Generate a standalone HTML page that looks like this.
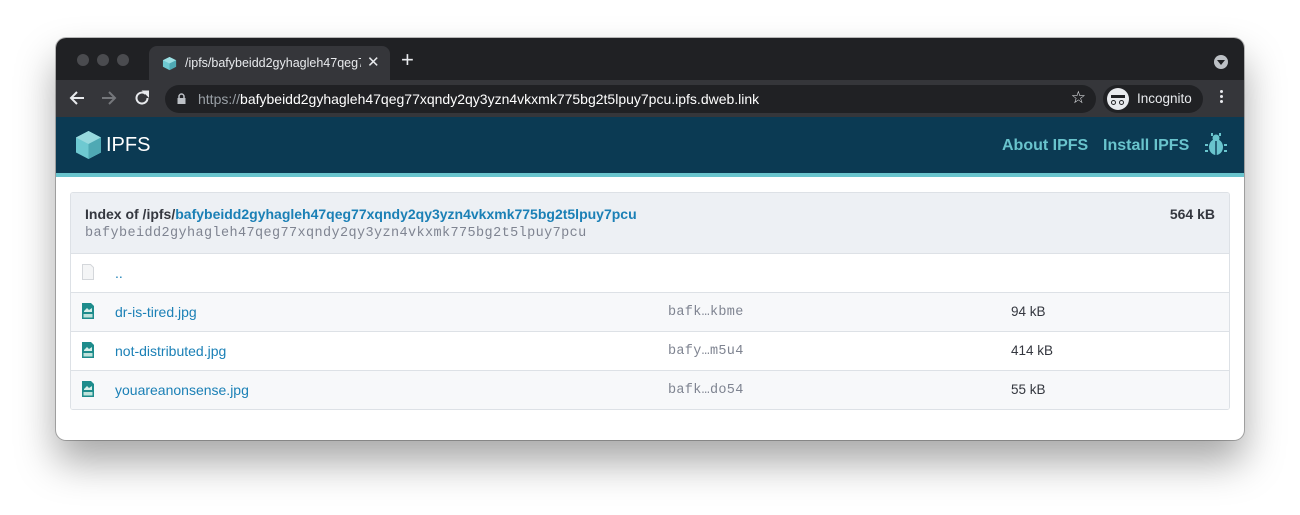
<!DOCTYPE html>
<html><head><style>
*{box-sizing:border-box;margin:0;padding:0}
body{width:1300px;height:515px;background:#fff;font-family:"Liberation Sans",sans-serif;position:relative;overflow:hidden}
.win{position:absolute;left:56px;top:38px;width:1188px;height:402px;border-radius:10px;overflow:hidden;background:#fff;box-shadow:0 22px 40px rgba(0,0,0,.35),0 0 0 1px rgba(0,0,0,.25)}
.tabbar{position:absolute;left:0;top:0;width:100%;height:42px;background:#202124}
.dot{position:absolute;top:16px;width:12px;height:12px;border-radius:50%;background:#4a4b4f}
.tab{position:absolute;left:93px;top:8px;width:241px;height:34px;background:#35363a;border-radius:8px 8px 0 0}
.tab .t{position:absolute;left:36px;top:10px;font-size:12.5px;color:#e8eaed;white-space:nowrap;width:176px;overflow:hidden}
.toolbar{position:absolute;left:0;top:42px;width:100%;height:37px;background:#35363a}
.omni{position:absolute;left:109px;top:5px;width:931px;height:28px;border-radius:14px;background:#202124}
.omni .u{position:absolute;left:33px;top:6px;font-size:14px;color:#9aa0a6;white-space:nowrap}
.omni .u b{color:#fff;font-weight:normal}
.inc{position:absolute;left:1047px;top:5px;width:100px;height:28px;border-radius:14px;background:#202124}
.ipfs{position:absolute;left:0;top:79px;width:100%;background:#0b3a53;border-bottom:4px solid #69c4cd;height:60px}
.nav{position:absolute;top:20px;font-size:16px;color:#69c4cd;font-weight:600}
.tbl{position:absolute;left:14px;top:154px;width:1160px;height:218px;border:1px solid #dde1e6;border-radius:3px;overflow:hidden}
.hd{height:61px;background:#edf0f4;border-bottom:1px solid #dde1e6;position:relative}
.row{height:39px;border-bottom:1px solid #dde1e6;position:relative;font-size:14px}
.row .n{position:absolute;left:44px;top:11px;color:#1b80b6}
.row .h{position:absolute;left:597px;top:12px;font-family:"Liberation Mono",monospace;font-size:13.5px;letter-spacing:.3px;color:#7f8491}
.row .s{position:absolute;left:940px;top:11px;color:#34373f;font-size:13.5px}
.ic{position:absolute;left:11px;top:10px;width:12px;height:16px}
</style></head><body>
<div class="win">
 <div class="tabbar">
  <div class="dot" style="left:21px"></div><div class="dot" style="left:41px"></div><div class="dot" style="left:61px"></div>
  <div class="tab">
   <svg style="position:absolute;left:13px;top:10px" width="15" height="15" viewBox="0 0 16 16"><polygon points="8,1 15,4.5 15,11.5 8,15 1,11.5 1,4.5" fill="#6ec9d1"/><polygon points="8,1 15,4.5 8,8 1,4.5" fill="#9de0e4"/><polygon points="8,8 15,4.5 15,11.5 8,15" fill="#4fa9b4"/></svg>
   <div class="t">/ipfs/bafybeidd2gyhagleh47qeg77xq</div>
   <div style="position:absolute;left:218px;top:7px;color:#e8eaed;font-size:15px">✕</div>
  </div>
  <div style="position:absolute;left:345px;top:9px;color:#e8eaed;font-size:22px;font-weight:300">+</div>
  <div style="position:absolute;left:1158px;top:17px;width:14px;height:14px;border-radius:50%;background:#bdc1c6"><div style="position:absolute;left:3px;top:5px;border-left:4px solid transparent;border-right:4px solid transparent;border-top:5px solid #202124"></div></div>
 </div>
 <div class="toolbar">
  <svg style="position:absolute;left:13px;top:10px" width="16" height="16" viewBox="0 0 16 16" fill="none" stroke="#e8eaed" stroke-width="2"><path d="M15 8H2M8 2L2 8l6 6"/></svg>
  <svg style="position:absolute;left:45px;top:10px" width="16" height="16" viewBox="0 0 16 16" fill="none" stroke="#75777b" stroke-width="2"><path d="M1 8h13M8 2l6 6-6 6"/></svg>
  <svg style="position:absolute;left:78px;top:10px" width="16" height="16" viewBox="0 0 16 16" fill="none" stroke="#e8eaed" stroke-width="2"><path d="M13.5 8A5.5 5.5 0 1 1 11.5 3.8"/><path d="M10 1.5h4v4z" fill="#e8eaed"/></svg>
  <div class="omni">
   <svg style="position:absolute;left:12px;top:8px" width="9" height="12" viewBox="0 0 9 12"><path d="M2 5V3.5a2.5 2.5 0 0 1 5 0V5" stroke="#bdc1c6" stroke-width="1.5" fill="none"/><rect x="0.5" y="5" width="8" height="6" fill="#bdc1c6"/></svg>
   <div class="u">https://<b>bafybeidd2gyhagleh47qeg77xqndy2qy3yzn4vkxmk775bg2t5lpuy7pcu.ipfs.dweb.link</b></div>
   <div style="position:absolute;right:10px;top:3px;color:#e8eaed;font-size:17px">☆</div>
  </div>
  <div class="inc">
   <div style="position:absolute;left:4px;top:3px;width:22px;height:22px;border-radius:50%;background:#e8eaed"><div style="position:absolute;left:4px;top:7px;width:14px;height:3px;background:#202124"></div><div style="position:absolute;left:4px;top:12px;width:5px;height:5px;border:1.5px solid #202124;border-radius:50%"></div><div style="position:absolute;left:12px;top:12px;width:5px;height:5px;border:1.5px solid #202124;border-radius:50%"></div></div>
   <div style="position:absolute;left:34px;top:6px;font-size:13.5px;color:#e8eaed">Incognito</div>
  </div>
  <div style="position:absolute;left:1164px;top:10px;width:3px"><div style="width:3px;height:3px;border-radius:50%;background:#e8eaed;margin-bottom:2px"></div><div style="width:3px;height:3px;border-radius:50%;background:#e8eaed;margin-bottom:2px"></div><div style="width:3px;height:3px;border-radius:50%;background:#e8eaed"></div></div>
 </div>
 <div class="ipfs">
  <svg style="position:absolute;left:19px;top:13px" width="27" height="30" viewBox="0 0 27 30"><polygon points="13.5,1 26,7.5 26,22.5 13.5,29 1,22.5 1,7.5" fill="#6ec9d1"/><polygon points="13.5,1 26,7.5 13.5,14 1,7.5" fill="#98d9de"/><polygon points="13.5,14 26,7.5 26,22.5 13.5,29" fill="#4fa9b4"/></svg>
  <div style="position:absolute;left:50px;top:17px;font-size:20px;color:#fff">IPFS</div>
  <div class="nav" style="left:946px">About IPFS</div>
  <div class="nav" style="left:1047px">Install IPFS</div>
  <svg style="position:absolute;left:1149px;top:16px" width="22" height="24" viewBox="0 0 22 24" fill="#69c4cd"><circle cx="11" cy="5" r="3.5"/><ellipse cx="11" cy="14" rx="7" ry="8"/><rect x="0" y="11" width="3" height="2"/><rect x="19" y="11" width="3" height="2"/><rect x="0" y="17" width="3" height="2"/><rect x="19" y="17" width="3" height="2"/><rect x="6" y="0" width="2" height="3"/><rect x="14" y="0" width="2" height="3"/><rect x="10.3" y="8" width="1.4" height="14" fill="#0b3a53"/></svg>
 </div>
 <div class="tbl">
  <div class="hd">
   <div style="position:absolute;left:14px;top:13px;font-size:14px;font-weight:bold;color:#34373f">Index of /ipfs/<span style="color:#1b80b6">bafybeidd2gyhagleh47qeg77xqndy2qy3yzn4vkxmk775bg2t5lpuy7pcu</span></div>
   <div style="position:absolute;left:14px;top:33px;font-family:'Liberation Mono',monospace;font-size:13.5px;letter-spacing:.4px;color:#7f8491">bafybeidd2gyhagleh47qeg77xqndy2qy3yzn4vkxmk775bg2t5lpuy7pcu</div>
   <div style="position:absolute;right:14px;top:13px;font-size:14px;font-weight:bold;color:#34373f">564 kB</div>
  </div>
  <div style="background:#fff">
  <div class="row" style="background:#fff"><svg class="ic" viewBox="0 0 12 16"><path d="M.5.5h8l3 3v12H.5z" fill="#f4f5f6" stroke="#d4d7db"/></svg><div class="n">..</div></div>
  <div class="row" style="background:#f7f8fa"><svg class="ic" viewBox="0 0 12 16"><path d="M0 0h9l3 3v13H0z" fill="#1e8c8c"/><path d="M2 8l3-3 2 2 3-2v4H2z" fill="#d8efe9"/><rect x="1.5" y="11" width="9" height="3.5" fill="#bfe3dc"/></svg><div class="n">dr-is-tired.jpg</div><div class="h">bafk…kbme</div><div class="s">94 kB</div></div>
  <div class="row" style="background:#fff"><svg class="ic" viewBox="0 0 12 16"><path d="M0 0h9l3 3v13H0z" fill="#1e8c8c"/><path d="M2 8l3-3 2 2 3-2v4H2z" fill="#d8efe9"/><rect x="1.5" y="11" width="9" height="3.5" fill="#bfe3dc"/></svg><div class="n">not-distributed.jpg</div><div class="h">bafy…m5u4</div><div class="s">414 kB</div></div>
  <div class="row" style="background:#f7f8fa;border-bottom:none"><svg class="ic" viewBox="0 0 12 16"><path d="M0 0h9l3 3v13H0z" fill="#1e8c8c"/><path d="M2 8l3-3 2 2 3-2v4H2z" fill="#d8efe9"/><rect x="1.5" y="11" width="9" height="3.5" fill="#bfe3dc"/></svg><div class="n">youareanonsense.jpg</div><div class="h">bafk…do54</div><div class="s">55 kB</div></div>
  </div>
 </div>
</div>
</body></html>
